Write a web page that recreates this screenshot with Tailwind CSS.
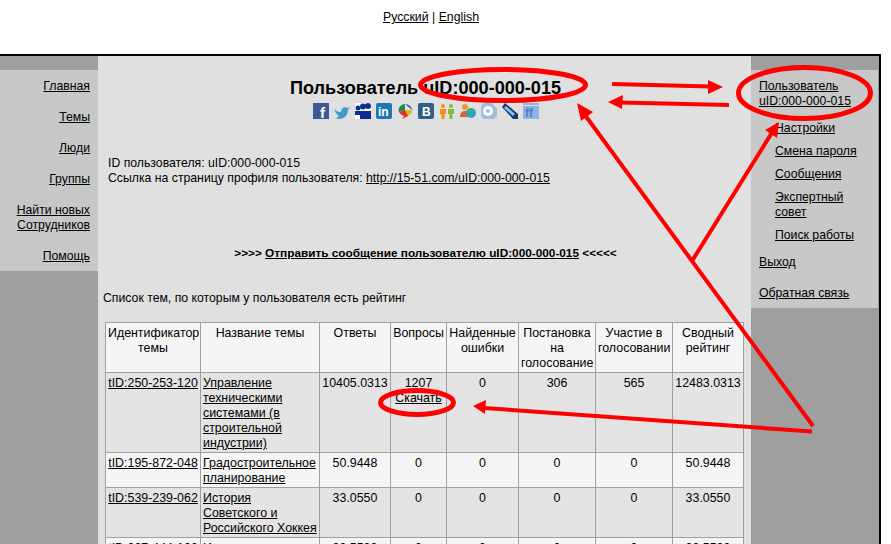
<!DOCTYPE html>
<html lang="ru">
  <head>
    <meta charset="UTF-8" />
    <title>Пользователь uID:000-000-015</title>
    <script src="https://cdn.jsdelivr.net/npm/@tailwindcss/browser@4"></script>
  </head>
  <body class="relative h-[544px] w-[891px] overflow-hidden bg-white font-['Liberation_Sans',Arial,sans-serif] text-[12.25px] leading-[15px] text-black">
    <!-- language switch -->
    <div class="h-[54px] pt-[10px] pr-[29px] text-center text-[12.3px]">
      <a href="#" class="underline">Русский</a> | <a href="#" class="underline">English</a>
    </div>

    <div class="flex h-[490px] w-[881px] border-t-2 border-r-2 border-black bg-[#9f9f9f]">
      <!-- left menu -->
      <div class="w-[98px] shrink-0 pt-[14px]">
        <nav class="flex flex-col gap-4 bg-[#c8c8c8] pt-[9px] pr-2 pb-[7px] text-right">
          <a href="#" class="underline">Главная</a>
          <a href="#" class="underline">Темы</a>
          <a href="#" class="underline">Люди</a>
          <a href="#" class="underline">Группы</a>
          <a href="#" class="underline">Найти новых Сотрудников</a>
          <a href="#" class="underline">Помощь</a>
        </nav>
      </div>

      <!-- content -->
      <main class="w-[653px] shrink-0 bg-[#e0e0e0] pr-[3px] pl-[5px]">
        <h1 class="pt-[21px] text-center text-[18.1px] leading-[22px] font-bold">Пользователь uID:000-000-015</h1>
        <div class="mt-[4px] flex justify-center gap-[5px]">
          <svg class="size-4" viewBox="0 0 16 16"><rect width="16" height="16" fill="#3b5998" /><text x="7" y="15" font-size="15" font-weight="700" fill="#fff" font-family="Liberation Sans">f</text></svg>
          <svg class="size-4" viewBox="0 0 16 16"><path d="M0 6c2 2 4 3 7 3 0-3 3-6 6-4l3-1-2 3c0 5-4 9-9 9-2 0-3-1-4-1 2 0 3-1 4-2C3 12 1 9 0 6z" fill="#3d9bd0" /></svg>
          <svg class="size-4" viewBox="0 0 16 16"><rect width="16" height="16" fill="#fff" /><circle cx="3" cy="5" r="2.500" fill="#0a2f8f" /><circle cx="8" cy="3.500" r="3" fill="#0a2f8f" /><circle cx="13" cy="3" r="3" fill="#0a2f8f" /><path d="M0 8h16v8H5v-4H0z" fill="#0a2f8f" /></svg>
          <svg class="size-4" viewBox="0 0 16 16"><rect width="16" height="16" rx="2" fill="#1f78b4" /><text x="2" y="13" font-size="12" font-weight="700" fill="#fff" font-family="Liberation Sans">in</text></svg>
          <svg class="size-4" viewBox="0 0 16 16"><path d="M8 1a7 6 0 0 1 7 6z" fill="#2a62c8" /><path d="M15 7a7 6 0 0 1-5 6L8 7z" fill="#e2b91e" /><path d="M8 1a7 6 0 0 0-6 8l6-2z" fill="#1d8f45" /><path d="M2 9c1 2 3 3 5 4l-2 3 6-3L8 7z" fill="#d8322b" /></svg>
          <svg class="size-4" viewBox="0 0 16 16"><rect width="16" height="16" rx="2" fill="#2f5f88" /><text x="4" y="13" font-size="12" font-weight="700" fill="#fff" font-family="Liberation Sans">В</text></svg>
          <svg class="size-4" viewBox="0 0 16 16"><circle cx="4" cy="3" r="2" fill="#f18f12" /><path d="M1 6h6v5H5.500v5h-3v-5H1z" fill="#f18f12" /><circle cx="12" cy="3" r="2" fill="#8ab83c" /><path d="M9 6h6v5h-1.500v5h-3v-5H9z" fill="#8ab83c" /></svg>
          <svg class="size-4" viewBox="0 0 16 16"><circle cx="5" cy="4" r="3" fill="#ef9a2d" /><path d="M0 14c0-4 2-6 5-6s4 2 4 6z" fill="#d9662a" /><circle cx="11" cy="10" r="5" fill="#2a9fd0" /><path d="M8 7a5 5 0 0 1 6 1l-3 4z" fill="#53b03c" /></svg>
          <svg class="size-4" viewBox="0 0 16 16"><path d="M3 0h8l5 6v7l-3 3H3l-3-3V3z" fill="#9fbfdc" /><circle cx="7" cy="8" r="5" fill="#fff" /><circle cx="7" cy="8" r="2" fill="#9fbfdc" /></svg>
          <svg class="size-4" viewBox="0 0 16 16"><path d="M3 0l13 11v5h-5L0 4z" fill="#123c78" /><path d="M4 3l9 8-2 2L2 5z" fill="#8fc0ea" /></svg>
          <svg class="size-4" viewBox="0 0 16 16"><rect width="16" height="16" fill="#8fb2e2" /><rect y="2" width="16" height="1" fill="#d4e2f5" /><text x="2" y="14" font-size="12" font-weight="700" fill="#4f7fc4" font-family="Liberation Sans">ff</text></svg>
        </div>

        <div class="pt-[37px] pl-[5px]">
          <p>ID пользователя: uID:000-000-015</p>
          <p>Ссылка на страницу профиля пользователя: <a href="#" class="underline">http://15-51.com/uID:000-000-015</a></p>
        </div>

        <p class="pt-[60px] text-center text-[11.8px] font-bold">&gt;&gt;&gt;&gt; <a href="#" class="underline">Отправить сообщение пользователю uID:000-000-015</a> &lt;&lt;&lt;&lt;&lt;</p>

        <p class="pt-[30px]">Список тем, по которым у пользователя есть рейтинг</p>

        <table class="mt-[16px] ml-[2px] w-[639px] table-fixed border-collapse text-center text-[12.4px] [&_td]:border [&_td]:border-[#a0a0a0] [&_td]:px-[2px] [&_td]:pt-[3px] [&_td]:align-top">
          <colgroup>
            <col class="w-[95px]" />
            <col class="w-[119px]" />
            <col class="w-[71px]" />
            <col class="w-[56px]" />
            <col class="w-[72px]" />
            <col class="w-[77px]" />
            <col class="w-[77px]" />
            <col class="w-[71px]" />
          </colgroup>
          <tbody>
            <tr class="h-[50px] bg-[#f5f5f5]">
              <td>Идентификатор темы</td>
              <td>Название темы</td>
              <td>Ответы</td>
              <td>Вопросы</td>
              <td>Найденные ошибки</td>
              <td>Постановка на голосование</td>
              <td>Участие в голосовании</td>
              <td>Сводный рейтинг</td>
            </tr>
            <tr class="h-[80px] bg-[#e4e4e4]">
              <td><a href="#" class="underline">tID:250-253-120</a></td>
              <td class="text-left"><a href="#" class="underline">Управление техническими системами (в строительной индустрии)</a></td>
              <td>10405.0313</td>
              <td>1207<br /><a href="#" class="underline">Скачать</a></td>
              <td>0</td>
              <td>306</td>
              <td>565</td>
              <td>12483.0313</td>
            </tr>
            <tr class="h-[35px] bg-[#f5f5f5]">
              <td><a href="#" class="underline">tID:195-872-048</a></td>
              <td class="text-left"><a href="#" class="underline">Градостроительное планирование</a></td>
              <td>50.9448</td>
              <td>0</td>
              <td>0</td>
              <td>0</td>
              <td>0</td>
              <td>50.9448</td>
            </tr>
            <tr class="h-[50px] bg-[#e4e4e4]">
              <td><a href="#" class="underline">tID:539-239-062</a></td>
              <td class="text-left"><a href="#" class="underline">История Советского и Российского Хоккея</a></td>
              <td>33.0550</td>
              <td>0</td>
              <td>0</td>
              <td>0</td>
              <td>0</td>
              <td>33.0550</td>
            </tr>
            <tr class="h-[50px] bg-[#f5f5f5]">
              <td><a href="#" class="underline">tID:307-444-100</a></td>
              <td class="text-left"><a href="#" class="underline">Инженерная механика</a></td>
              <td>30.5500</td>
              <td>0</td>
              <td>0</td>
              <td>0</td>
              <td>0</td>
              <td>30.5500</td>
            </tr>
          </tbody>
        </table>
      </main>

      <!-- right menu -->
      <div class="w-[127px] shrink-0 pt-[14px]">
        <nav class="flex flex-col bg-[#c8c8c8] pt-[9px] pr-2 pb-[7px] pl-2">
          <a href="#" class="underline">Пользователь uID:000-000-015</a>
          <div class="flex flex-col gap-2 pt-3 pl-4">
            <a href="#" class="underline">Настройки</a>
            <a href="#" class="underline">Смена пароля</a>
            <a href="#" class="underline">Сообщения</a>
            <a href="#" class="underline">Экспертный совет</a>
            <a href="#" class="underline">Поиск работы</a>
          </div>
          <a href="#" class="pt-3 underline">Выход</a>
          <a href="#" class="pt-4 underline">Обратная связь</a>
        </nav>
      </div>
    </div>

    <!-- red annotations drawn over the screenshot -->
    <svg class="absolute inset-0 size-full" viewBox="0 0 891 544" fill="none" stroke="#ff0000">
      <ellipse cx="503" cy="85" rx="82.500" ry="15.500" stroke-width="5" />
      <ellipse cx="804.500" cy="93" rx="66" ry="25.500" stroke-width="5" />
      <ellipse cx="417" cy="402.500" rx="36.500" ry="12" stroke-width="5" />
      <path d="M612 84 L710 86.500" stroke-width="4" />
      <path d="M723 87 L708 80 L708 94 Z" fill="#ff0000" stroke="none" />
      <path d="M729 105 L620 102.500" stroke-width="4" />
      <path d="M608 102 L623 95 L622 109 Z" fill="#ff0000" stroke="none" />
      <path d="M813 426 L582 111" stroke-width="4" />
      <path d="M577 103 L593 112 L581 121 Z" fill="#ff0000" stroke="none" />
      <path d="M692 261 L773 131" stroke-width="4" />
      <path d="M779 122 L777 138 L765 130 Z" fill="#ff0000" stroke="none" />
      <path d="M812 431.500 L484 408" stroke-width="4" />
      <path d="M473 406 L486 400 L485 414 Z" fill="#ff0000" stroke="none" />
    </svg>
  </body>
</html>
